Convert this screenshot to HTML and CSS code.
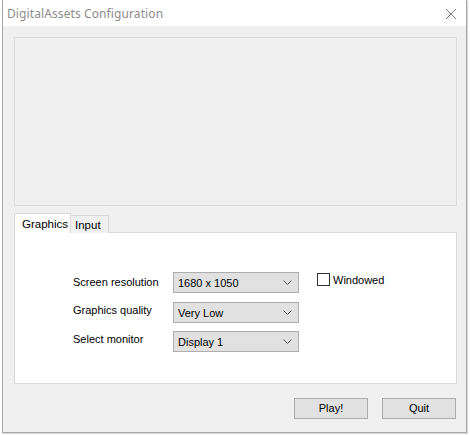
FILE: index.html
```html
<!DOCTYPE html>
<html>
<head>
<meta charset="utf-8">
<link rel="stylesheet" href="styles.css">
</head>
<body>
<div class="window">
  <div class="titlebar">
    <span class="title">DigitalAssets Configuration</span>
    <svg class="close" width="12" height="12" viewBox="0 0 12 12"><path d="M1 1 L11 11 M11 1 L1 11" stroke="#7a7a7a" stroke-width="1" fill="none"/></svg>
  </div>
  <div class="content">
    <div class="banner"></div>
    <div class="tabs">
      <div class="tab active">Graphics</div>
      <div class="tab">Input</div>
    </div>
    <div class="panel">
      <div class="form">
        <div class="label l1">Screen resolution</div>
        <div class="select"><span>1680 x 1050</span><svg width="9" height="5" viewBox="0 0 9 5"><path d="M0.5 0.5 L4.5 4.5 L8.5 0.5" stroke="#555" fill="none"/></svg></div>
        <div class="check"><span class="box"></span><span>Windowed</span></div>
        <div class="label l2">Graphics quality</div>
        <div class="select"><span>Very Low</span><svg width="9" height="5" viewBox="0 0 9 5"><path d="M0.5 0.5 L4.5 4.5 L8.5 0.5" stroke="#555" fill="none"/></svg></div>
        <div></div>
        <div class="label l3">Select monitor</div>
        <div class="select"><span>Display 1</span><svg width="9" height="5" viewBox="0 0 9 5"><path d="M0.5 0.5 L4.5 4.5 L8.5 0.5" stroke="#555" fill="none"/></svg></div>
        <div></div>
      </div>
    </div>
    <div class="buttons">
      <div class="btn">Play!</div>
      <div class="btn">Quit</div>
    </div>
  </div>
</div>
</body>
</html>
```
FILE: styles.css
```css
html, body { margin: 0; padding: 0; }
body {
  background: #ffffff;
  width: 470px;
  height: 435px;
  overflow: hidden;
  font-family: "Liberation Sans", Arial, sans-serif;
  font-size: 11px;
  color: #000;
}
.window {
  margin-left: 2px;
  width: 465px;
  height: 433px;
  box-sizing: border-box;
  border: 1px solid #a6a6a6;
  border-top: none;
  background: #f0f0f0;
  display: flex;
  flex-direction: column;
  box-shadow: 1px 1px 1px rgba(0,0,0,0.15);
}
.titlebar {
  height: 26px;
  background: #ffffff;
  display: flex;
  align-items: center;
  justify-content: space-between;
  padding: 0 9px 0 4px;
  flex: none;
}
.title {
  font-family: "Noto Sans", "Liberation Sans", sans-serif;
  font-size: 12px;
  color: #8c8c8c;
  letter-spacing: 0.1px;
}
.close { margin-top: 1px; }
.content {
  padding: 11px 9px 0 11px;
  display: flex;
  flex-direction: column;
}
.banner {
  width: 443px;
  height: 169px;
  box-sizing: border-box;
  border: 1px solid #dcdcdc;
  background: #f0f0f0;
}
.tabs {
  display: flex;
  align-items: flex-end;
  margin-top: 7px;
  height: 20px;
  position: relative;
  z-index: 1;
  margin-bottom: -1px;
}
.tab {
  box-sizing: border-box;
  border: 1px solid #d9d9d9;
  border-bottom: none;
  background: #f0f0f0;
  height: 18px;
  padding: 0 4px;
  line-height: 18px;
  font-size: 11.5px;
  width: 39px;
  margin-left: -1px;
}
.tab.active {
  background: #ffffff;
  height: 20px;
  width: 57px;
  margin-left: 0;
  padding: 0 7px;
  line-height: 20px;
}
.panel {
  width: 443px;
  height: 152px;
  box-sizing: border-box;
  border: 1px solid #d9d9d9;
  background: #ffffff;
  padding: 39px 0 0 58px;
}
.form {
  display: grid;
  grid-template-columns: 100px 126px auto;
  grid-template-rows: 30px 29px 21px;
  align-items: start;
}
.label { font-size: 11px; line-height: 21px; }
.l2 { margin-top: -2px; }
.l3 { margin-top: -2px; }
.select {
  box-sizing: border-box;
  height: 21px;
  border: 1px solid #adadad;
  background: #e1e1e1;
  display: flex;
  align-items: center;
  justify-content: space-between;
  padding: 0 6px 0 4px;
  font-size: 11px;
}
.check {
  display: flex;
  align-items: center;
  margin-left: 18px;
  margin-top: 1px;
  font-size: 11px;
  gap: 3px;
}
.box {
  width: 13px;
  height: 13px;
  box-sizing: border-box;
  border: 1px solid #333;
  background: #fff;
}
.buttons {
  display: flex;
  justify-content: flex-end;
  gap: 14px;
  margin-top: 14px;
  padding-right: 1px;
}
.btn {
  width: 74px;
  height: 21px;
  box-sizing: border-box;
  border: 1px solid #adadad;
  background: #e1e1e1;
  text-align: center;
  line-height: 19px;
  font-size: 11px;
}
```
